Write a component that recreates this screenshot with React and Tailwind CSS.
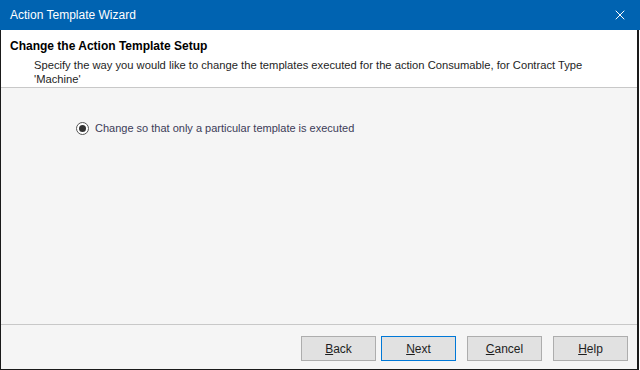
import { X } from 'lucide-react'

const BUTTONS = [
  { key: 'B', rest: 'ack', primary: false, gap: '' },
  { key: 'N', rest: 'ext', primary: true, gap: 'ml-[5px]' },
  { key: 'C', rest: 'ancel', primary: false, gap: 'ml-[11px]' },
  { key: 'H', rest: 'elp', primary: false, gap: 'ml-[11px]' },
]

function WizardButton({ label, primary, className }) {
  return (
    <button
      className={`w-[75px] h-[25px] bg-[#e1e1e1] text-[12px] text-[#1e1e1e] border ${
        primary ? 'border-[#0078d7]' : 'border-[#adadad]'
      } ${className}`}
    >
      {label}
    </button>
  )
}

export default function App() {
  return (
    <div className="w-[640px] h-[370px] flex flex-col bg-white font-['Liberation_Sans',Arial,sans-serif]">
      {/* Title bar */}
      <div className="h-[30px] shrink-0 bg-[#0063b1] flex items-center justify-between pl-[10px] pr-[12px]">
        <span className="text-white text-[12px]">Action Template Wizard</span>
        <X size={16} strokeWidth={1.5} className="text-white" />
      </div>

      <div className="flex-1 flex flex-col border-l border-r-2 border-b border-[#1a1a1a] mr-px">
        {/* Header */}
        <div className="h-[58px] shrink-0 bg-white pt-[7px] pl-[9px] border-b border-[#c8c8c8]">
          <div className="text-[12px] font-bold text-black">Change the Action Template Setup</div>
          <div className="pl-[24px] pt-[3px] text-[11.2px] leading-[14px] text-[#1e1e1e]">
            Specify the way you would like to change the templates executed for the action Consumable, for Contract Type
            <br />
            'Machine'
          </div>
        </div>

        {/* Body */}
        <div className="flex-1 bg-[#f5f5f5] pt-[32px] pl-[75px]">
          <label className="flex items-center gap-[6px] text-[11px] text-[#3c3c58]">
            <span className="w-[13px] h-[13px] rounded-full border border-[#555] bg-white flex items-center justify-center">
              <span className="w-[7px] h-[7px] rounded-full bg-[#333]" />
            </span>
            Change so that only a particular template is executed
          </label>
        </div>

        {/* Footer */}
        <div className="h-[45px] shrink-0 bg-[#f5f5f5] border-t border-[#c8c8c8] flex items-start justify-end pt-[11px] pr-[9px]">
          {BUTTONS.map(({ key, rest, primary, gap }) => (
            <WizardButton
              key={key}
              primary={primary}
              className={gap}
              label={<><span className="underline">{key}</span>{rest}</>}
            />
          ))}
        </div>
      </div>
    </div>
  )
}
